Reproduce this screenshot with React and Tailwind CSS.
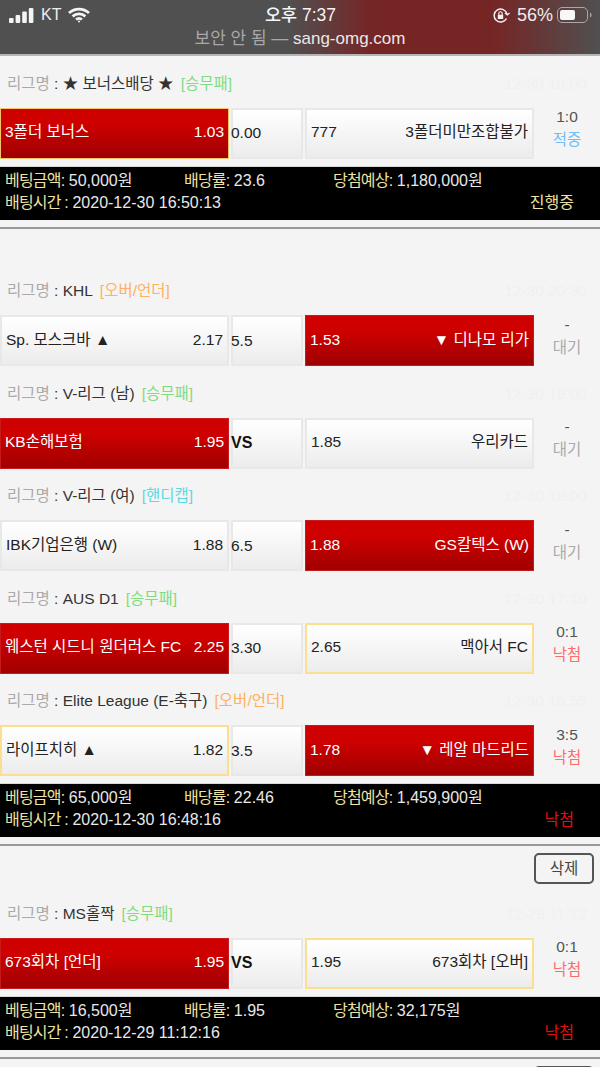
import React from 'react';

const Tag = ({ type }) => {
    const color = type === '승무패' ? 'text-[#7fdc7f]' : type === '핸디캡' ? 'text-[#5fd8e0]' : 'text-[#ffb060]';
    return <span className={`ml-[7px] ${color}`}>[{type}]</span>;
};

const Team = ({ side, name, odds, state }) => {
    // state: on = picked red, win = yellow border, none
    const base = state === 'on'
        ? 'bg-gradient-to-b from-[#cf0000] from-30% to-[#a00000] text-white'
        : 'bg-gradient-to-b from-white to-[#ececec] text-[#222]';
    const border = state === 'on'
        ? (side === 'bonus' ? 'border border-[#f5c56a]' : 'border border-[#c81a1a]')
        : state === 'win' ? 'border-2 border-[#fbdf8e]' : 'border-2 border-[#e8e8e8]';
    return (
        <div className={`flex h-full w-[229px] items-center justify-between px-[4px] pb-[2px] text-[15.5px] ${base} ${border}`}>
            {side === 'right' ? (
                <>
                    <span>{odds}</span>
                    <span>{name}</span>
                </>
            ) : (
                <>
                    <span>{name}</span>
                    <span>{odds}</span>
                </>
            )}
        </div>
    );
};

const Game = ({ league, type, time, left, mid, right, score, result }) => {
    const resultColor = result === '적중' ? 'text-[#6fbdf5]' : result === '낙첨' ? 'text-[#ff6b6b]' : 'text-[#aaaaaa]';
    return (
        <>
            <div className="flex h-[51.5px] items-center justify-between pl-[7px] pr-[13px] pt-[3px] text-[15.5px]">
                <div className="text-[#333]">
                    <span className="text-[#aaaaaa]">리그명</span> : {league}
                    <Tag type={type} />
                </div>
                <span className="text-[#f0f0f0]">{time}</span>
            </div>
            <div className="flex h-[51px] items-stretch">
                <Team side={left.side || 'left'} name={left.name} odds={left.odds} state={left.state} />
                <div className={`ml-[2px] flex w-[72px] items-center border-2 border-[#e8e8e8] bg-gradient-to-b from-white to-[#ececec] ${mid === 'VS' ? 'text-[16px] font-bold text-[#111]' : 'text-[15.5px] text-[#222]'}`}>
                    <span className="-ml-[2px]">{mid}</span>
                </div>
                <div className="ml-[2px]">
                    <Team side="right" name={right.name} odds={right.odds} state={right.state} />
                </div>
                <div className="flex flex-1 flex-col items-center justify-center pb-[10px] text-[15.5px] leading-[23px]">
                    <span className="text-[#555]">{score}</span>
                    <span className={resultColor}>{result}</span>
                </div>
            </div>
        </>
    );
};

const Label = ({ children }) => <span className="tracking-[-0.8px] text-[#eee3a0]">{children}</span>;

const Summary = ({ amount, rate, expect, time, status }) => (
    <div className="mt-[7px] h-[54px] border-t border-[#d8d8d8] bg-black pl-[5px] pr-[26px] pt-[3px] text-[16px] leading-[22px] text-[#e8e8e8]">
        <div className="flex">
            <div className="w-[179px]"><Label>베팅금액:</Label> {amount}</div>
            <div className="w-[149px]"><Label>배당률:</Label> {rate}</div>
            <div><Label>당첨예상:</Label> {expect}</div>
        </div>
        <div className="flex justify-between">
            <div><Label>배팅시간 :</Label> {time}</div>
            <span className={status === '낙첨' ? 'text-[#e01010]' : 'text-[#eee3a0]'}>{status}</span>
        </div>
    </div>
);

const Divider = () => <div className="mt-[7px] h-[2px] bg-[#999999]" />;

const DeleteRow = ({ label }) => (
    <div className="flex h-[40px] items-start justify-end pr-[6px] pt-[7px]">
        <button className="h-[31px] w-[60px] rounded-[5px] border-2 border-[#555] bg-[#f4f4f4] text-[15.5px] text-[#444]">{label}</button>
    </div>
);

const StatusBar = () => (
    <div className="h-[56px] border-b-2 border-[#b5b5b5] bg-[linear-gradient(90deg,#505050_0%,#505050_48%,#762525_62%,#762525_82%,#505050_100%)] text-white">
        <div className="flex h-[30px] items-center justify-between pl-[9px] pr-[8px]">
            <div className="flex w-[180px] items-center">
                <svg width="25" height="15" viewBox="0 0 25 15" fill="#f4f4f4">
                    <rect x="0" y="10" width="4.6" height="5" rx="1" />
                    <rect x="6.6" y="7" width="4.6" height="8" rx="1" />
                    <rect x="13.2" y="3.500" width="4.600" height="11.5" rx="1" />
                    <rect x="19.8" y="0" width="4.600" height="15" rx="1" />
                </svg>
                <span className="ml-[7px] text-[16px] text-[#eeeeee]">KT</span>
                <svg className="ml-[7px]" width="22" height="16" viewBox="0 0 22 16" fill="none" stroke="#f4f4f4" strokeWidth="2.8">
                    <path d="M1 6C6.600.8 15.400.8 21 6" />
                    <path d="M4.600 9.400c3.600-3.300 9.200-3.300 12.800 0" />
                    <path d="M8 12.500c1.800-1.400 4.200-1.400 6 0" />
                    <circle cx="11" cy="14.500" r="1" fill="#f4f4f4" stroke="none" />
                </svg>
            </div>
            <span className="text-[17.5px] font-medium text-[#f5f5f5]">오후 7:37</span>
            <div className="flex w-[180px] items-center justify-end">
                <svg width="17" height="15" viewBox="0 0 17 15" fill="none" stroke="#f2f2f2" strokeWidth="1.5">
                    <path d="M13.500 10.500A6.500 6.500 0 1 1 14 6" />
                    <path d="M12 5l2.300 2L16.500 5" strokeWidth="1.300" />
                    <rect x="4.800" y="6.800" width="5.400" height="4.200" rx=".6" fill="#f2f2f2" stroke="none" />
                    <path d="M5.800 7V5.400a1.700 1.700 0 0 1 3.400 0V7" strokeWidth="1.100" />
                </svg>
                <span className="ml-[7px] text-[18px] text-[#eeeeee]">56%</span>
                <svg className="ml-[4px]" width="35" height="16" viewBox="0 0 35 16">
                    <rect x=".5" y=".5" width="30" height="15" rx="4.500" fill="none" stroke="#a8a8a8" />
                    <rect x="3" y="3" width="15" height="10" rx="2" fill="#f8f8f8" />
                    <path d="M33 5.500v5c1-.4 1.500-1.400 1.500-2.500S34 5.900 33 5.500z" fill="#a8a8a8" />
                </svg>
            </div>
        </div>
        <div className="flex h-[18px] items-center justify-center text-[17px] text-[#e8e8e8]">
            <span className="text-[#a8a8a8]">보안 안 됨 —&nbsp;</span>sang-omg.com
        </div>
    </div>
);

const App = () => (
    <div className="h-[1067px] overflow-hidden bg-[#f4f4f4] font-['Liberation_Sans','Noto_Sans_CJK_KR',sans-serif]">
        <StatusBar />

        <Game
            league="★ 보너스배당 ★"
            type="승무패"
            time="12-30 18:00"
            left={{ side: 'bonus', name: '3폴더 보너스', odds: '1.03', state: 'on' }}
            mid="0.00"
            right={{ name: '3폴더미만조합불가', odds: '777' }}
            score="1:0"
            result="적중"
        />
        <Summary amount="50,000원" rate="23.6" expect="1,180,000원" time="2020-12-30 16:50:13" status="진행중" />
        <Divider />

        <div className="h-[35px]" />
        <Game league="KHL" type="오버/언더" time="12-30 20:30"
            left={{ name: 'Sp. 모스크바 ▲', odds: '2.17' }} mid="5.5"
            right={{ name: '▼ 디나모 리가', odds: '1.53', state: 'on' }} score="-" result="대기" />
        <Game league="V-리그 (남)" type="승무패" time="12-30 19:00"
            left={{ name: 'KB손해보험', odds: '1.95', state: 'on' }} mid="VS"
            right={{ name: '우리카드', odds: '1.85' }} score="-" result="대기" />
        <Game league="V-리그 (여)" type="핸디캡" time="12-30 19:00"
            left={{ name: 'IBK기업은행 (W)', odds: '1.88' }} mid="6.5"
            right={{ name: 'GS칼텍스 (W)', odds: '1.88', state: 'on' }} score="-" result="대기" />
        <Game league="AUS D1" type="승무패" time="12-30 17:10"
            left={{ name: '웨스턴 시드니 원더러스 FC', odds: '2.25', state: 'on' }} mid="3.30"
            right={{ name: '맥아서 FC', odds: '2.65', state: 'win' }} score="0:1" result="낙첨" />
        <Game league="Elite League (E-축구)" type="오버/언더" time="12-30 16:55"
            left={{ name: '라이프치히 ▲', odds: '1.82', state: 'win' }} mid="3.5"
            right={{ name: '▼ 레알 마드리드', odds: '1.78', state: 'on' }} score="3:5" result="낙첨" />
        <Summary amount="65,000원" rate="22.46" expect="1,459,900원" time="2020-12-30 16:48:16" status="낙첨" />
        <Divider />

        <DeleteRow label="삭제" />
        <Game league="MS홀짝" type="승무패" time="12-29 11:12"
            left={{ name: '673회차 [언더]', odds: '1.95', state: 'on' }} mid="VS"
            right={{ name: '673회차 [오버]', odds: '1.95', state: 'win' }} score="0:1" result="낙첨" />
        <Summary amount="16,500원" rate="1.95" expect="32,175원" time="2020-12-29 11:12:16" status="낙첨" />
        <Divider />

        {/* next bet's button is cut by the bottom of the screen */}
        <DeleteRow />
    </div>
);

export default App;
